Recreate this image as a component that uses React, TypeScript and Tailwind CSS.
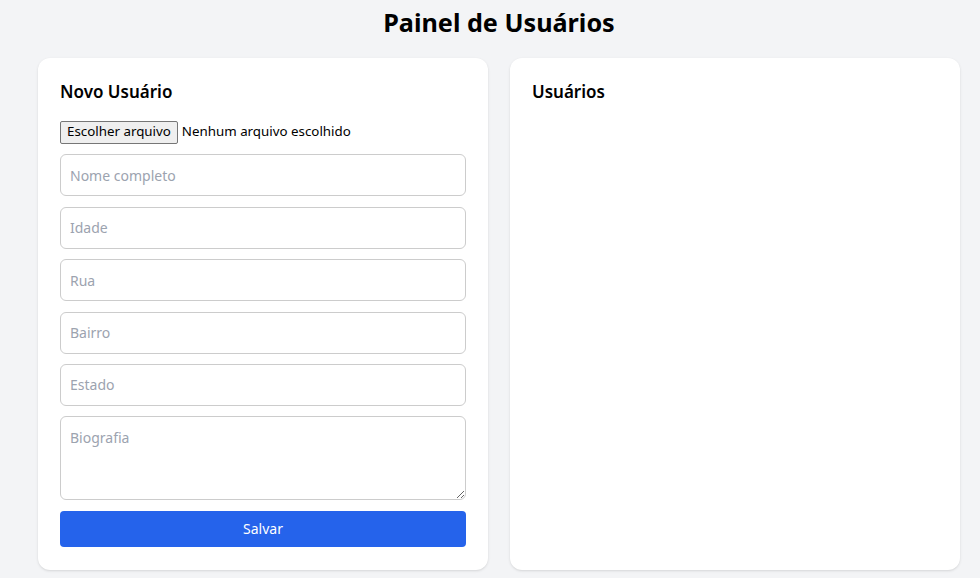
import React from "react";

const fields = ["Nome completo", "Idade", "Rua", "Bairro", "Estado"];

export default function App() {
  return (
    <div className="min-h-screen bg-gray-100 font-['Noto_Sans',sans-serif] text-black">
      <div className="w-[998px]">
        <h1 className="text-center text-[25.2px] font-bold leading-[36px] pt-[4px]">Painel de Usuários</h1>
        <div className="flex gap-[22px] px-[38px] mt-[18px]">
          <div className="w-[450px] shrink-0 h-[512px] bg-white rounded-xl shadow p-[22px]">
            <h2 className="text-[17px] font-semibold leading-[24px] mb-[16px]">Novo Usuário</h2>
            <form className="flex flex-col gap-[10.4px]" onSubmit={(e) => e.preventDefault()}>
              <div className="flex items-center h-[24px] text-[13.33px]">
                <label className="h-[23px] flex items-center px-[6px] bg-[#efefef] border border-[#767676] rounded-[2px] text-black cursor-default">
                  Escolher arquivo
                </label>
                <span className="ml-[4px]">Nenhum arquivo escolhido</span>
              </div>
              {fields.map((f) => (
                <input
                  key={f}
                  placeholder={f}
                  className="h-[42px] w-full border border-[#cccccc] rounded-md px-[9px] text-[14px] placeholder:text-[#9ca3af] outline-none"
                />
              ))}
              <textarea
                placeholder="Biografia"
                className="h-[84px] w-full border border-[#cccccc] rounded-md px-[9px] py-[10px] text-[14px] placeholder:text-[#9ca3af] outline-none"
              />
              <button type="submit" className="h-[36px] w-full bg-[#2563eb] text-white text-[14px] rounded">
                Salvar
              </button>
            </form>
          </div>
          <div className="w-[450px] shrink-0 h-[512px] bg-white rounded-xl shadow p-[22px]">
            <h2 className="text-[17px] font-semibold leading-[24px]">Usuários</h2>
          </div>
        </div>
      </div>
    </div>
  );
}
